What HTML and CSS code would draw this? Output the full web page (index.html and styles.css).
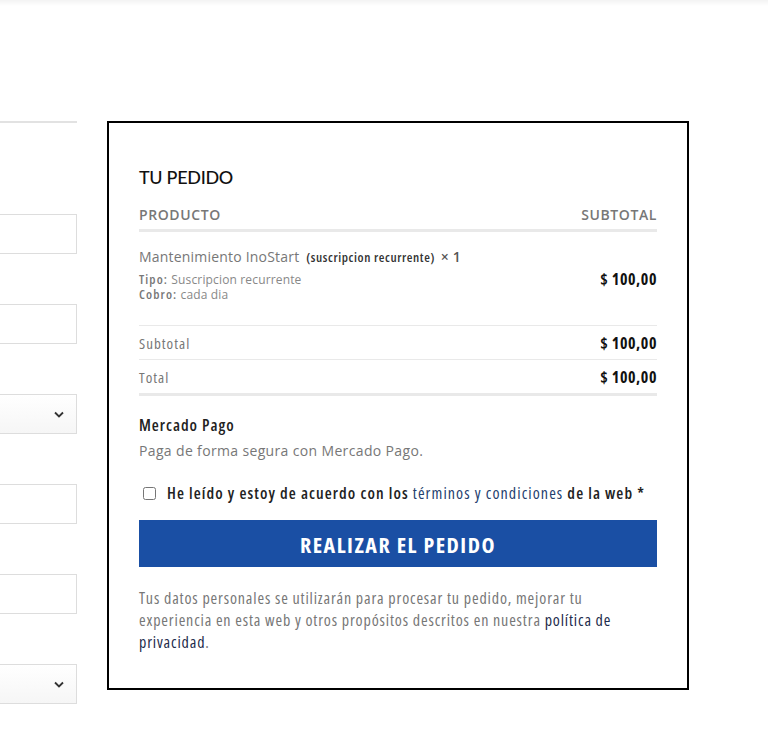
FILE: index.html
```html
<!DOCTYPE html>
<html lang="es">
<head>
    <meta charset="UTF-8">
    <meta name="viewport" content="width=device-width, initial-scale=1.0">
    <title>Finalizar compra</title>
    <link rel="stylesheet" href="styles.css">
</head>
<body>
    <div class="top-strip"></div>

    <div class="checkout">
        <!-- columna de datos de facturación (recortada) -->
        <div class="billing">
            <div class="billing-rule"></div>
            <div class="field"><input class="input" type="text"></div>
            <div class="field"><input class="input" type="text"></div>
            <div class="field">
                <div class="select">
                    <span class="chevron"><svg width="10" height="7" viewBox="0 0 10 7"><path d="M1 1.5l4 4 4-4" fill="none" stroke="#333" stroke-width="1.8"/></svg></span>
                </div>
            </div>
            <div class="field"><input class="input" type="text"></div>
            <div class="field"><input class="input" type="text"></div>
            <div class="field">
                <div class="select">
                    <span class="chevron"><svg width="10" height="7" viewBox="0 0 10 7"><path d="M1 1.5l4 4 4-4" fill="none" stroke="#333" stroke-width="1.8"/></svg></span>
                </div>
            </div>
        </div>

        <!-- resumen del pedido -->
        <div class="order-box">
            <h3 class="order-title">TU PEDIDO</h3>

            <div class="order-head">
                <span>PRODUCTO</span>
                <span>SUBTOTAL</span>
            </div>

            <div class="order-item">
                <div class="item-info">
                    <div class="item-name">Mantenimiento InoStart <span class="item-tag">(suscripcion recurrente)</span> <span class="item-qty">× 1</span></div>
                    <div class="item-meta"><b>Tipo:</b> Suscripcion recurrente</div>
                    <div class="item-meta"><b>Cobro:</b> cada dia</div>
                </div>
                <div class="amount item-amount">$ 100,00</div>
            </div>

            <div class="order-row">
                <span class="row-label">Subtotal</span>
                <span class="amount">$ 100,00</span>
            </div>
            <div class="order-row total">
                <span class="row-label">Total</span>
                <span class="amount">$ 100,00</span>
            </div>

            <div class="payment">
                <div class="payment-name">Mercado Pago</div>
                <div class="payment-desc">Paga de forma segura con Mercado Pago.</div>
            </div>

            <label class="terms">
                <input type="checkbox" class="terms-check">
                <span>He leído y estoy de acuerdo con los <a href="#">términos y condiciones</a> de la web *</span>
            </label>

            <button class="place-order" type="button">REALIZAR EL PEDIDO</button>

            <p class="privacy">Tus datos personales se utilizarán para procesar tu pedido, mejorar tu experiencia en esta web y otros propósitos descritos en nuestra <a href="#">política de privacidad</a>.</p>
        </div>
    </div>
</body>
</html>
```

FILE: styles.css
```css
body {
    margin: 0;
    background: #fff;
    font-family: 'Open Sans', 'Noto Sans', sans-serif;
    color: #777;
    overflow: hidden;
}

/* textos estrechos */
.item-tag,
.item-meta b,
.amount,
.row-label,
.payment-name,
.terms,
.place-order,
.privacy {
    font-family: 'Open Sans', 'Noto Sans', sans-serif;
    font-stretch: condensed;
}

.top-strip {
    height: 6px;
    background: linear-gradient(#f3f3f3, #fff);
}

.checkout {
    display: flex;
    align-items: flex-start;
    gap: 30px;
    padding-top: 115px;
}

/* columna izquierda */
.billing {
    width: 377px;
    margin-left: -300px;
    flex-shrink: 0;
}

.billing-rule {
    height: 2px;
    background: #e2e2e2;
    margin-bottom: 91px;
}

.field {
    height: 40px;
    margin-bottom: 50px;
}

.input,
.select {
    box-sizing: border-box;
    display: block;
    width: 100%;
    height: 40px;
    margin: 0;
    border: 1px solid #ddd;
    background: #fff;
}

.select {
    background: linear-gradient(#fff, #f6f6f6);
    display: flex;
    align-items: center;
    justify-content: flex-end;
    padding-right: 12px;
}

.chevron {
    display: flex;
}

/* caja del pedido */
.order-box {
    box-sizing: border-box;
    width: 582px;
    min-height: 569px;
    border: 2px solid #000;
    padding: 43px 30px 30px;
    flex-shrink: 0;
}

.order-title {
    margin: 0 0 17px;
    font-family: 'Lato', 'Open Sans', sans-serif;
    font-size: 18px;
    font-weight: 500;
    color: #111;
    letter-spacing: -0.3px;
}

.order-head {
    display: flex;
    justify-content: space-between;
    font-size: 14px;
    font-weight: 600;
    letter-spacing: 0.6px;
    color: #777;
    padding-bottom: 5px;
    border-bottom: 3px solid #e9e9e9;
}

.order-item {
    display: flex;
    justify-content: space-between;
    align-items: center;
    padding: 15px 0 23px;
    border-bottom: 1px solid #e9e9e9;
}

.item-name {
    font-size: 14px;
    letter-spacing: 0.2px;
    color: #777;
    margin-bottom: 6px;
}

.item-tag {
    font-size: 13px;
    font-weight: 600;
    letter-spacing: 0.6px;
    color: #333;
    margin-left: 3px;
}

.item-qty {
    font-size: 14px;
    font-weight: 600;
    color: #555;
    margin-left: 2px;
}

.item-meta {
    font-size: 12px;
    line-height: 15px;
    letter-spacing: 0.15px;
    color: #888;
}

.item-meta b {
    font-size: 13px;
    font-weight: 600;
    letter-spacing: 1.1px;
    color: #777;
}

.amount {
    font-size: 16px;
    font-weight: 700;
    letter-spacing: 0.6px;
    color: #111;
}

.item-amount {
    margin-top: 8px;
}

.order-row {
    display: flex;
    justify-content: space-between;
    align-items: center;
    height: 33px;
    border-bottom: 1px solid #e9e9e9;
}

.order-row.total {
    height: 33px;
    border-bottom: 3px solid #e9e9e9;
}

.row-label {
    font-size: 15px;
    letter-spacing: 1px;
    color: #777;
}

.payment {
    padding-top: 18px;
}

.payment-name {
    font-size: 16px;
    font-weight: 600;
    letter-spacing: 1px;
    color: #222;
    line-height: 22px;
}

.payment-desc {
    font-size: 14px;
    letter-spacing: 0.35px;
    color: #777;
    margin-top: 4px;
    line-height: 22px;
}

.terms {
    display: flex;
    align-items: center;
    gap: 11px;
    margin-top: 20px;
    padding-left: 4px;
    font-size: 16px;
    font-weight: 600;
    letter-spacing: 1.1px;
    color: #222;
}

.terms-check {
    margin: 0;
    width: 13px;
    height: 13px;
}

.terms a {
    color: #24406e;
    font-weight: 400;
    text-decoration: none;
}

.place-order {
    display: block;
    width: 100%;
    height: 47px;
    margin-top: 16px;
    border: 0;
    background: #1a4fa4;
    color: #fff;
    font-size: 22px;
    font-weight: 700;
    letter-spacing: 1.5px;
    cursor: pointer;
}

.privacy {
    margin: 20px 0 0;
    font-size: 16px;
    line-height: 22px;
    letter-spacing: 0.85px;
    color: #777;
}

.privacy a {
    color: #1d2c4c;
    text-decoration: none;
}
```
